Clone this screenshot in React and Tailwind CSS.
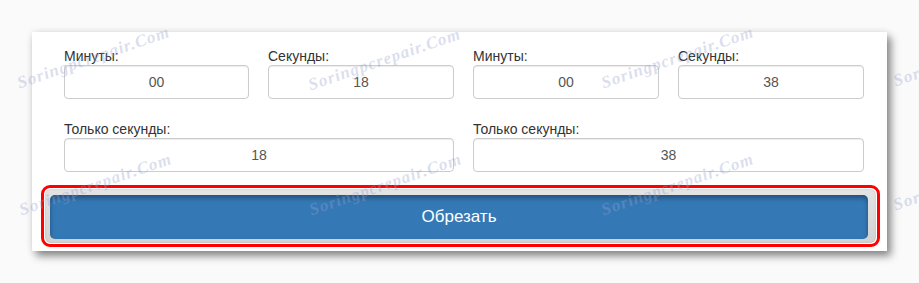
import React from "react";

const wm = [
  [22, 90], [313, 92], [606, 90], [898, 88],
  [24, 217], [314, 217], [606, 217], [898, 212],
];

function Field({ label, value, w }) {
  return (
    <div className={`flex flex-col ${w}`}>
      <div className="h-[18px] text-[14px] leading-[18px] text-[#333]">{label}</div>
      <div className="h-[34px] rounded-[4px] border border-[#cccccc] bg-white shadow-[inset_0_1px_1px_rgba(0,0,0,0.075)] flex items-center justify-center text-[14px] text-[#555]">
        {value}
      </div>
    </div>
  );
}

export default function App() {
  return (
    <div
      className="relative h-[283px] w-[919px] overflow-hidden bg-[#fafafa] pt-[32px] pl-[32px]"
      style={{ fontFamily: '"Liberation Sans", Arial, sans-serif' }}
    >
      <div className="w-[855px] h-[219px] bg-white pt-[15px] pl-[32px] shadow-[4px_5px_8px_rgba(0,0,0,0.45),0_0_8px_rgba(0,0,0,0.08)]">
        <div className="flex gap-[19px]">
          <div className="flex flex-col w-[390px]">
            <div className="flex gap-[19px]">
              <Field label="Минуты:" value="00" w="w-[185px]" />
              <Field label="Секунды:" value="18" w="w-[186px]" />
            </div>
            <div className="mt-[21px]">
              <Field label="Только секунды:" value="18" w="w-[390px]" />
            </div>
          </div>
          <div className="flex flex-col w-[391px]">
            <div className="flex gap-[19px]">
              <Field label="Минуты:" value="00" w="w-[186px]" />
              <Field label="Секунды:" value="38" w="w-[186px]" />
            </div>
            <div className="mt-[21px]">
              <Field label="Только секунды:" value="38" w="w-[391px]" />
            </div>
          </div>
        </div>
        <div className="-ml-[23px] mt-[13px] w-[839px] h-[62px] rounded-[9px] border-[3px] border-[#ff0000] bg-white p-[1px]">
          <div className="h-full w-full rounded-[6px] bg-gradient-to-b from-[#e4e4e4] to-[#d2d2d2] pl-[5px] pr-[8px] pt-[6px] pb-[4px] shadow-[inset_0_0_2px_rgba(0,0,0,0.15)]">
            <div className="h-[44px] w-full rounded-[5px] bg-[#3479b6] shadow-[inset_0_3px_5px_rgba(0,0,0,0.35)] flex items-center justify-center text-white text-[17px]">
              Обрезать
            </div>
          </div>
        </div>
      </div>
      {wm.map(([x, y], i) => (
        <div
          key={i}
          className="pointer-events-none absolute whitespace-nowrap text-[17px] font-bold italic tracking-[1px] text-[rgba(150,160,205,0.35)] origin-bottom-left -rotate-[19deg]"
          style={{ left: x, top: y - 20, fontFamily: '"Liberation Serif", serif' }}
        >
          Soringpcrepair.Com
        </div>
      ))}
    </div>
  );
}
